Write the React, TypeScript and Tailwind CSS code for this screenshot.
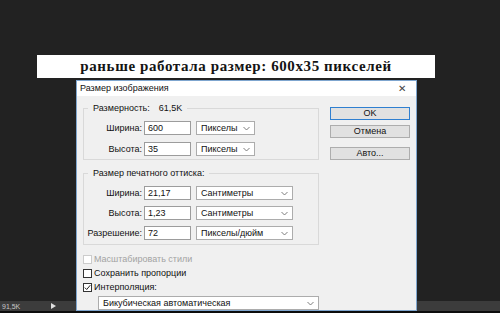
import React from 'react';

const ui = { fontFamily: '"Liberation Sans", Arial, sans-serif' };

function Chevron() {
  return (
    <svg width="7" height="5" viewBox="0 0 7 5" className="shrink-0">
      <polyline points="0.5,1 3.5,4 6.5,1" fill="none" stroke="#707070" strokeWidth="0.9" />
    </svg>
  );
}

function Select({ value, w }: { value: string; w: string }) {
  return (
    <div className={`${w} flex h-[14px] items-center justify-between border border-[#acacac] bg-white pl-[4px] pr-[4px]`}>
      <span className="leading-none">{value}</span>
      <Chevron />
    </div>
  );
}

function Field({ label, value, unit, selW }: { label: string; value: string; unit: string; selW: string }) {
  return (
    <div className="flex items-center">
      <div className="w-[58px] text-right leading-none">{label}</div>
      <div className="ml-[2px] flex h-[14px] w-[47px] items-center border border-[#9c9c9c] bg-white pl-[3px] leading-none">{value}</div>
      <div className="ml-[5px]">
        <Select value={unit} w={selW} />
      </div>
    </div>
  );
}

function Group({ legend, h, children }: { legend: React.ReactNode; h: string; children: React.ReactNode }) {
  return (
    <div className={`relative w-[236px] ${h} border border-[#d9d9d9]`}>
      <div className="absolute -top-[6px] left-[4px] flex bg-[#f0f0f0] px-[5px] leading-[11px]">{legend}</div>
      {children}
    </div>
  );
}

function Btn({ children, primary }: { children: React.ReactNode; primary?: boolean }) {
  return (
    <div
      className={`flex h-[13px] w-[80px] items-center justify-center border bg-[#e1e1e1] leading-none ${
        primary ? 'border-[#2f7fd0]' : 'border-[#adadad]'
      }`}
    >
      {children}
    </div>
  );
}

function Check({ label, checked, disabled }: { label: string; checked?: boolean; disabled?: boolean }) {
  return (
    <div className="flex h-[14px] items-center">
      <div
        className={`flex h-[9px] w-[9px] items-center justify-center border bg-white ${
          disabled ? 'border-[#cccccc]' : 'border-[#333333]'
        }`}
      >
        {checked && (
          <svg width="7" height="7" viewBox="0 0 7 7">
            <polyline points="0.8,3.6 2.7,5.5 6.3,1.2" fill="none" stroke="#222" strokeWidth="1" />
          </svg>
        )}
      </div>
      <span className={`ml-[2px] leading-none ${disabled ? 'text-[#a3a3a3]' : ''}`}>{label}</span>
    </div>
  );
}

export default function App() {
  return (
    <div className="relative flex h-[313px] w-[500px] flex-col overflow-hidden bg-[#222222] pt-[55px]">
      {/* status bar behind the dialog */}
      <div className="absolute left-0 top-[301px] flex h-[10px] w-full items-center bg-[#3c3c3c]" style={ui}>
        <span className="ml-[2px] text-[7px] leading-none text-[#c8c8c8]">91,5K</span>
        <svg width="5" height="6" viewBox="0 0 5 6" className="ml-[31px]">
          <polygon points="0,0 5,3 0,6" fill="#e0e0e0" />
        </svg>
      </div>
      <div className="absolute bottom-0 left-0 h-[2px] w-full bg-[#0c0c0c]" />

      <div className="ml-[37px] flex h-[23px] w-[398px] items-center justify-center bg-white">
        <span
          className="text-[15px] font-bold leading-none tracking-[0.6px] text-[#141414]"
          style={{ fontFamily: '"Liberation Serif", "Times New Roman", serif' }}
        >
          раньше работала размер: 600х35 пикселей
        </span>
      </div>

      <div
        className="relative z-10 ml-[76px] mt-[2px] flex h-[231px] w-[341px] flex-col overflow-hidden border border-[#7fa6cf] text-[9px] text-[#111]"
        style={ui}
      >
        <div className="flex h-[17px] items-center justify-between bg-white pl-[3px] pr-[10px]">
          <span className="leading-none">Размер изображения</span>
          <span className="text-[10px] leading-none text-[#444]">✕</span>
        </div>
        <div className="flex flex-1 flex-col bg-[#f0f0f0] pl-[6px] pt-[12px]">
          <div className="flex">
            <div className="flex flex-col">
              <Group
                h="h-[52px]"
                legend={
                  <>
                    <span>Размерность:</span>
                    <span className="ml-[9px]">61,5K</span>
                  </>
                }
              >
                <div className="flex flex-col gap-[7px] pt-[12px]">
                  <Field label="Ширина:" value="600" unit="Пикселы" selW="w-[59px]" />
                  <Field label="Высота:" value="35" unit="Пикселы" selW="w-[59px]" />
                </div>
              </Group>
              <div className="mt-[13px]">
                <Group h="h-[72px]" legend={<span>Размер печатного оттиска:</span>}>
                  <div className="flex flex-col gap-[6px] pt-[12px]">
                    <Field label="Ширина:" value="21,17" unit="Сантиметры" selW="w-[97px]" />
                    <Field label="Высота:" value="1,23" unit="Сантиметры" selW="w-[97px]" />
                    <Field label="Разрешение:" value="72" unit="Пикселы/дюйм" selW="w-[97px]" />
                  </div>
                </Group>
              </div>
            </div>
            <div className="-mt-[1px] ml-[11px] flex flex-col">
              <Btn primary>OK</Btn>
              <div className="mt-[5px]">
                <Btn>Отмена</Btn>
              </div>
              <div className="mt-[9px]">
                <Btn>Авто...</Btn>
              </div>
            </div>
          </div>
          <div className="mt-[7px] flex flex-col">
            <Check label="Масштабировать стили" disabled />
            <Check label="Сохранить пропорции" />
            <Check label="Интерполяция:" checked />
          </div>
          <div className="ml-[15px] mt-[2px]">
            <Select value="Бикубическая автоматическая" w="w-[221px]" />
          </div>
        </div>
      </div>
    </div>
  );
}
